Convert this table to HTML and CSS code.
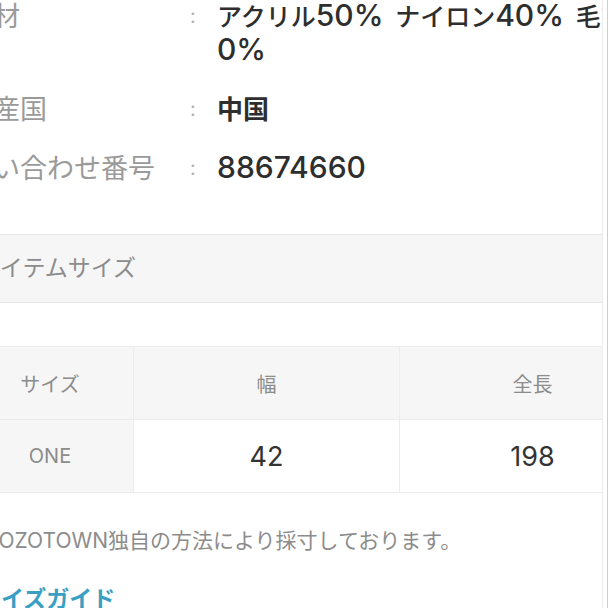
FILE: index.html
```html
<!DOCTYPE html>
<html lang="ja">
<head>
    <meta charset="UTF-8">
    <meta name="viewport" content="width=device-width, initial-scale=1.0">
    <title>アイテム詳細</title>
    <link rel="stylesheet" href="styles.css">
</head>
<body>
    <div class="page">
        <dl class="spec">
            <div class="spec-row">
                <dt>素材</dt>
                <dd class="colon">:</dd>
                <dd class="value">アクリル<span class="num">50%</span> ナイロン<span class="num">40%</span> 毛<span class="num">1<wbr>0%</span></dd>
            </div>
            <div class="spec-row">
                <dt>原産国</dt>
                <dd class="colon">:</dd>
                <dd class="value strong">中国</dd>
            </div>
            <div class="spec-row">
                <dt>問い合わせ番号</dt>
                <dd class="colon">:</dd>
                <dd class="value"><span class="num">88674660</span></dd>
            </div>
        </dl>

        <h2 class="section-title">アイテムサイズ</h2>

        <table class="size-table">
            <thead>
                <tr>
                    <th>サイズ</th>
                    <th>幅</th>
                    <th>全長</th>
                </tr>
            </thead>
            <tbody>
                <tr>
                    <th>ONE</th>
                    <td>42</td>
                    <td>198</td>
                </tr>
            </tbody>
        </table>

        <p class="note">ZOZOTOWN独自の方法により採寸しております。</p>
        <a class="guide-link" href="#">サイズガイド</a>
    </div>

    <!-- edge of the side panel that sits over the page -->
    <div class="panel-edge"></div>
</body>
</html>
```

FILE: styles.css
```css
body {
    margin: 0;
    overflow: hidden;
    background-color: #fff;
    font-family: Inter, "Noto Sans CJK JP", sans-serif;
    color: #333;
}
.page {
    width: 700px;
    margin-left: -34px;
    margin-top: -14px;
}
.spec {
    margin: 0;
    padding-right: 40px;
}
.spec-row {
    display: grid;
    grid-template-columns: 217px 20px 1fr;
    padding: 13px 0;
    font-size: 27px;
    line-height: 33px;
}
.spec-row:first-child {
    padding-top: 14px;
    padding-bottom: 12px;
}
.spec-row dt {
    color: #9a9a9a;
    white-space: nowrap;
}
.spec-row dd {
    margin: 0;
}
.colon {
    color: #b0b0b0;
    font-size: 20px;
    text-align: center;
}
.value {
    padding-left: 14px;
    font-weight: 500;
    font-size: 25px;
    word-spacing: 5px;
    color: #2e2e2e;
}
.value .num {
    font-size: 30px;
    line-height: 1;
}
.value.strong {
    font-weight: 700;
    font-size: 26px;
}
.section-title {
    margin: 35px 0 0;
    padding: 0 12px;
    height: 67px;
    line-height: 67px;
    font-size: 23px;
    font-weight: normal;
    color: #8c8c8c;
    background-color: #f6f6f6;
    border-top: 1px solid #e6e6e6;
    border-bottom: 1px solid #e6e6e6;
}
.size-table {
    width: 700px;
    margin-top: 43px;
    border-collapse: collapse;
    table-layout: fixed;
}
.size-table th,
.size-table td {
    height: 72px;
    padding: 0;
    text-align: center;
    border: 1px solid #ececec;
}
.size-table th {
    font-size: 20px;
    font-weight: normal;
    color: #8c8c8c;
    background-color: #f6f6f6;
}
.size-table th:first-child {
    width: 166px;
}
.size-table thead th:nth-child(2) {
    width: 265px;
}
.size-table td {
    font-size: 27px;
    color: #333;
    background-color: #fff;
}
.note {
    margin: 33px 0 0;
    padding-left: 20px;
    font-size: 21px;
    line-height: 30px;
    color: #8c8c8c;
}
.guide-link {
    display: block;
    margin-top: 28px;
    padding-left: 12px;
    font-size: 23px;
    line-height: 30px;
    font-weight: 700;
    color: #3a9fc2;
    text-decoration: none;
}
.panel-edge {
    position: fixed;
    top: 0;
    bottom: 0;
    left: 602px;
    width: 4px;
    background-color: #fff;
    border-left: 1px solid #ececec;
    border-right: 1px solid #cfcfcf;
}
```
